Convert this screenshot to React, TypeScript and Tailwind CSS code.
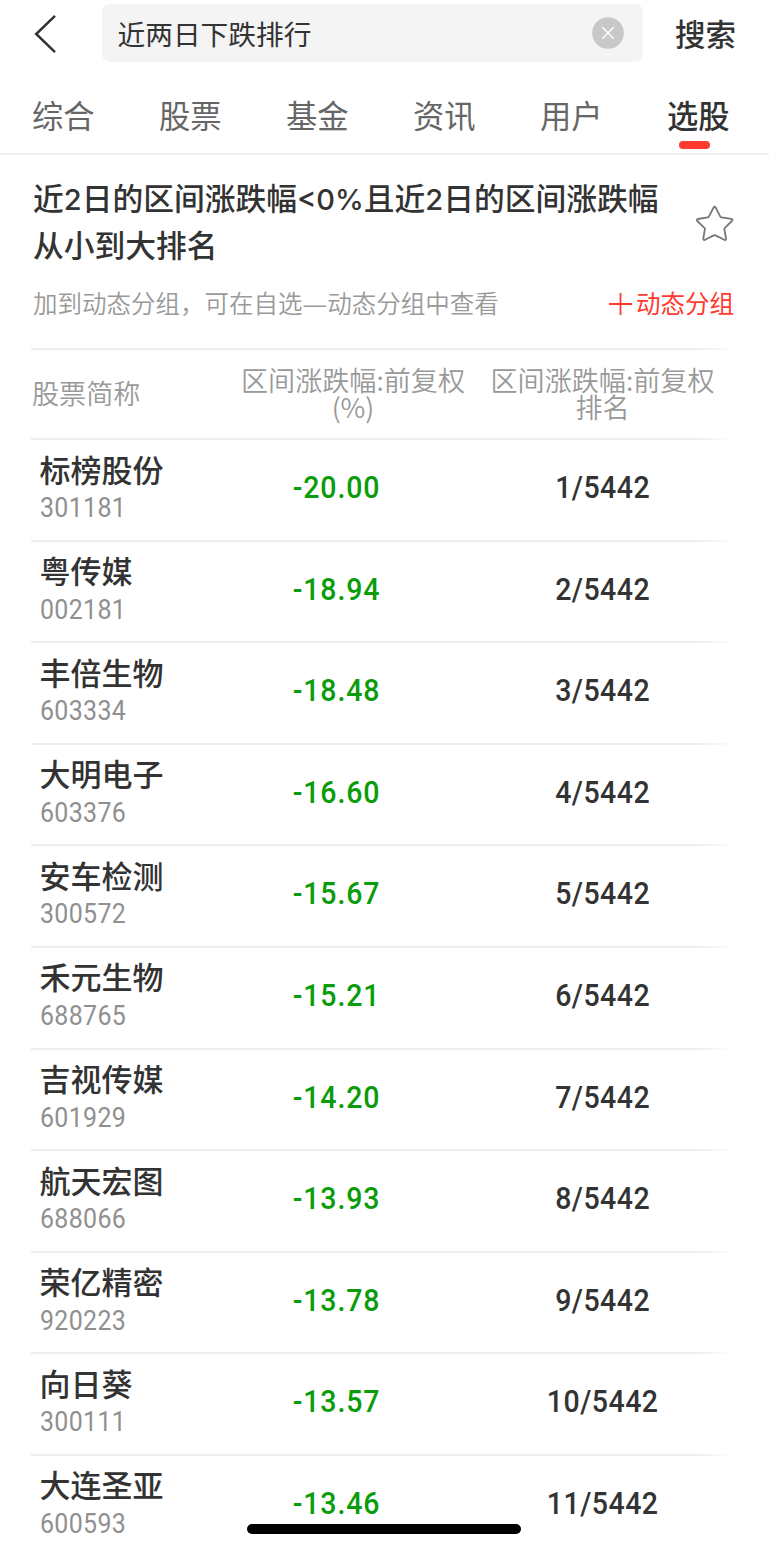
const stocks = [
  ["标榜股份", "301181", "-20.00"],
  ["粤传媒", "002181", "-18.94"],
  ["丰倍生物", "603334", "-18.48"],
  ["大明电子", "603376", "-16.60"],
  ["安车检测", "300572", "-15.67"],
  ["禾元生物", "688765", "-15.21"],
  ["吉视传媒", "601929", "-14.20"],
  ["航天宏图", "688066", "-13.93"],
  ["荣亿精密", "920223", "-13.78"],
  ["向日葵", "300111", "-13.57"],
  ["大连圣亚", "600593", "-13.46"],
];

const tabs = ["综合", "股票", "基金", "资讯", "用户"];

function Divider() {
  return (
    <div className="ml-[31px] h-[2px] w-[704px] shrink-0 bg-linear-to-r from-[#eeeeee] from-95% to-white" />
  );
}

function SearchBar() {
  return (
    <div className="flex h-[66px] shrink-0 items-start pt-1">
      <button className="ml-[34px] mt-[10px] block" aria-label="返回">
        <svg width="24" height="40" viewBox="0 0 24 40" fill="none" stroke="#333" strokeWidth="2.5">
          <path d="M21 1.8 2.2 20 21 38.2" />
        </svg>
      </button>
      <div className="ml-[44px] flex h-[58px] w-[541px] items-center rounded-[8px] bg-[#f4f4f4] pl-[15.5px] pr-[19px]">
        <span className="flex-1 text-[27.7px] leading-[40px] text-[#333]">近两日下跌排行</span>
        <svg width="32" height="32" viewBox="0 0 32 32" fill="none">
          <circle cx="16" cy="16" r="15.8" fill="#c8c8c8" />
          <path d="m10.3 10.3 11.4 11.4m0-11.4L10.3 21.7" stroke="white" strokeWidth="1.5" />
        </svg>
      </div>
      <button className="ml-[32px] mt-[9px] text-[30.5px] font-medium leading-[40px] text-[#333]">搜索</button>
    </div>
  );
}

function TabBar() {
  return (
    <nav className="flex h-[89px] shrink-0 border-b-2 border-[#f1f1f1] pl-[32px] text-[31.3px] leading-[44px] text-[#666]">
      {tabs.map((t) => (
        <div key={t} className="w-[127px] pt-[27px]">{t}</div>
      ))}
      <div className="flex flex-col pt-[27px] font-medium text-[#333]">
        选股
        <span className="ml-[12px] mt-[4px] h-[8px] w-[31px] rounded-[4px] bg-[#ff3b30]" />
      </div>
    </nav>
  );
}

export default function App() {
  return (
    <div className="relative flex h-[1550px] w-[769px] flex-col overflow-hidden bg-white font-['Noto_Sans_CJK_SC',sans-serif] whitespace-nowrap">
      <SearchBar />
      <TabBar />
      <section className="flex h-[193px] shrink-0 flex-col">
        <div className="flex h-[119px] pl-[33px]">
          <h1 className="w-[662px] pt-[18px] text-[30.75px] font-medium leading-[47px] text-[#333]">
            近<span className="font-['Inter'] text-[29px] leading-none">2</span>日的区间涨跌幅
            <span className="font-['Inter'] text-[29px] leading-none">&lt;0%</span>且近
            <span className="font-['Inter'] text-[29px] leading-none">2</span>日的区间涨跌幅
            <br />
            从小到大排名
          </h1>
          <svg className="mt-[50px]" width="39" height="38" viewBox="0 0 39 38" fill="none" stroke="#777" strokeWidth="1.8" strokeLinejoin="round">
            <path d="M18.5 2.7Q19.6 .7 20.7 2.7L25.3 11.6Q25.6 12.3 26.5 12.4L36.3 13.9Q38.4 14.4 36.9 16L29.9 22.8Q29.2 23.5 29.4 24.3L31 33.5Q31.1 35.7 29.2 34.8L20.5 30.4Q19.6 30 18.8 30.4L10 34.8Q8 35.5 8.3 33.5L9.9 24.3Q10 23.5 9.4 22.9L2.3 16Q.9 14.5 2.9 14L12.7 12.4Q13.6 12.3 13.9 11.6Z" />
          </svg>
        </div>
        <div className="flex h-[60px] items-center pl-[33px] text-[24.5px] leading-[36px]">
          <span className="mb-[2px] w-[575px] font-[350] text-[#999]">
            加到动态分组，可在自选
            <span className="mr-[1.5px] ml-[1.5px] inline-block scale-x-115">—</span>
            动态分组中查看
          </span>
          <svg width="25" height="24" viewBox="0 0 25 24" stroke="#ff3b30" strokeWidth="1.8">
            <path d="M1 12h23M12.5 1v22" />
          </svg>
          <span className="mb-[2px] ml-[3px] text-[#ff3b30]">动态分组</span>
        </div>
      </section>
      <Divider />
      <div className="flex h-[88px] shrink-0 items-center pb-[3px] text-center text-[27.1px] font-[350] leading-[27px] text-[#999]">
        <div className="w-[227px] pl-[32px] text-left">股票简称</div>
        <div className="w-[252px]">区间涨跌幅:前复权<br />(%)</div>
        <div className="w-[247px]">区间涨跌幅:前复权<br />排名</div>
      </div>
      {stocks.map(([name, code, change], i) => (
        <div key={code} className="flex h-[101.6px] shrink-0 flex-col">
          <Divider />
          <div className="flex">
            <div className="w-[227px] pl-[39.5px] pt-[6.5px]">
              <div className="text-[31px] font-medium leading-[44px] text-[#333]">{name}</div>
              <div className="mt-[2.5px] origin-left scale-x-90 font-['Roboto'] text-[27.7px] leading-[30px] tracking-[0.4px] text-[#909090]">{code}</div>
            </div>
            <div className="w-[220px] pt-[28px] text-center font-['Roboto'] text-[31px] font-medium leading-[40px] text-[#0a9c0a]">
              <span className="inline-block scale-x-92 tracking-[0.9px]">{change}</span>
            </div>
            <div className="ml-[32px] w-[247px] pt-[28px] text-center font-['Roboto'] text-[31px] font-medium leading-[40px] text-[#333]">
              <span className="inline-block scale-x-92 tracking-[0.5px]">{i + 1}/5442</span>
            </div>
          </div>
        </div>
      ))}
      <div className="absolute left-[247px] top-[1524px] h-[10px] w-[274px] rounded-full bg-black" />
    </div>
  );
}
